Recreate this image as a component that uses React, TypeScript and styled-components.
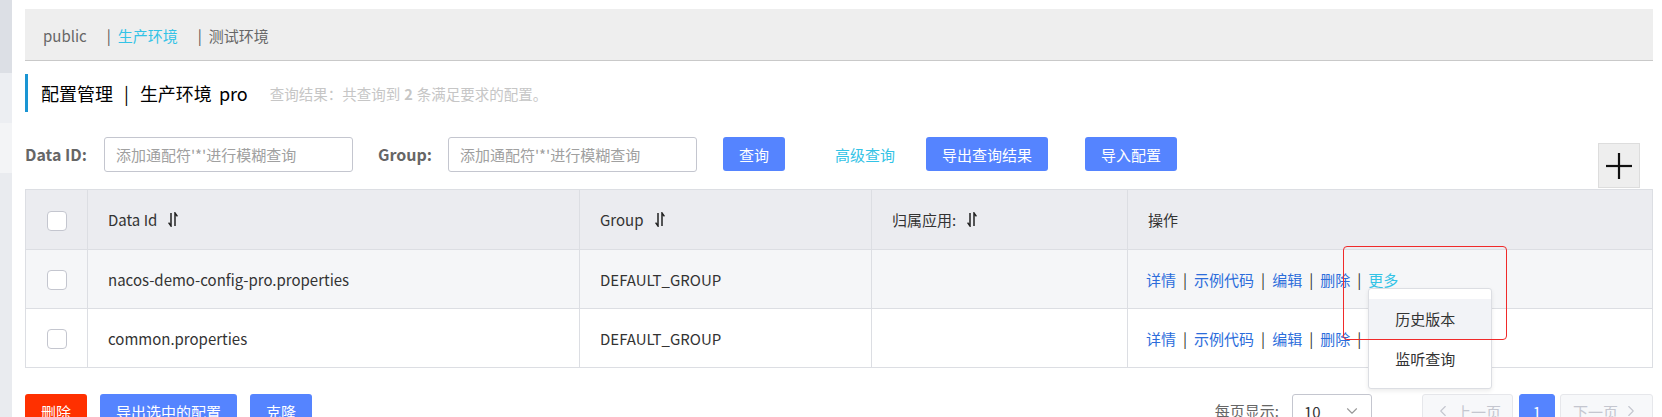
import React from "react";
import styled, { createGlobalStyle } from "styled-components";
import { ChevronDown, ChevronLeft, ChevronRight } from "lucide-react";

const Color = {
  Primary: "#5584ff",
  Danger: "#ff3000",
  Cyan: "#33c3e6",
  Link: "#2c6ddb",
  Border: "#dcdee3",
  Text: "#333333",
  Muted: "#666666",
  Placeholder: "#a0a0a0",
};

const GlobalStyle = createGlobalStyle`
  html, body {
    margin: 0;
    padding: 0;
    background: #fff;
  }
  body {
    font-family: "Noto Sans CJK SC", "Noto Sans", sans-serif;
    font-size: 15px;
    color: ${Color.Text};
  }
  * {
    box-sizing: border-box;
  }
`;

const Page = styled.div`
  display: flex;
  height: 417px;
  overflow: hidden;
`;

const Sidebar = styled.aside`
  width: 12px;
  flex: none;
  display: flex;
  flex-direction: column;
  background: #e9ebef;
`;

const SideBlock = styled.div<{ $h: number; $bg: string }>`
  height: ${({ $h }) => $h}px;
  background: ${({ $bg }) => $bg};
`;

const Main = styled.main`
  flex: 1;
  min-width: 0;
  padding: 9px 9px 0 13px;
`;

const TabBar = styled.div`
  height: 52px;
  background: #eeeeee;
  border-bottom: 1px solid #c9c9c9;
  display: flex;
  align-items: center;
  padding: 2px 0 0 18px;
`;

const Tab = styled.span<{ $active?: boolean }>`
  color: ${({ $active }) => ($active ? Color.Cyan : Color.Muted)};
`;

const TabSep = styled.span`
  margin: 0 7px 0 20px;
  color: #555;
`;

const Title = styled.h2`
  margin: 13px 0 0;
  height: 38px;
  border-left: 3px solid #1a95d3;
  padding-left: 13px;
  display: flex;
  align-items: center;
  font-size: 18px;
  font-weight: normal;
  color: #000;
`;

const TitleSep = styled.span`
  margin: 0 11px;
`;

const TitleEnv = styled.span`
  margin-left: 7px;
`;

const Summary = styled.span`
  margin-left: 22px;
  font-size: 14.5px;
  color: #c6c6c6;

  strong {
    margin: 0 4px;
  }
`;

const SearchRow = styled.div`
  margin-top: 25px;
  height: 52px;
  display: flex;
  align-items: flex-start;
`;

const FieldLabel = styled.label<{ $ml?: number }>`
  margin-left: ${({ $ml = 0 }) => $ml}px;
  line-height: 35px;
  font-size: 16px;
  font-weight: bold;
  color: ${Color.Muted};
`;

const Input = styled.input<{ $ml?: number }>`
  margin-left: ${({ $ml = 0 }) => $ml}px;
  width: 249px;
  height: 35px;
  border: 1px solid #c4c6cf;
  border-radius: 3px;
  padding: 0 11px;
  font: inherit;
  color: ${Color.Text};
  outline: none;

  &::placeholder {
    color: ${Color.Placeholder};
  }
`;

const Button = styled.button<{ $ml?: number; $danger?: boolean }>`
  margin-left: ${({ $ml = 0 }) => $ml}px;
  height: 34px;
  padding: 0 16px;
  border: none;
  border-radius: 3px;
  background: ${({ $danger }) => ($danger ? Color.Danger : Color.Primary)};
  color: #fff;
  font: inherit;
  cursor: pointer;
`;

const TextButton = styled.button<{ $ml?: number }>`
  margin-left: ${({ $ml = 0 }) => $ml}px;
  height: 35px;
  padding: 0;
  border: none;
  background: none;
  color: ${Color.Cyan};
  font: inherit;
  cursor: pointer;
`;

const PlusButton = styled.button`
  margin: 6px 13px 0 auto;
  width: 42px;
  height: 45px;
  padding: 0;
  border: 1px solid #dddddd;
  background: #eeeeee;
  display: flex;
  align-items: center;
  justify-content: center;
`;

const Table = styled.table`
  width: 100%;
  border-collapse: collapse;
  table-layout: fixed;
`;

const Th = styled.th<{ $center?: boolean }>`
  height: 60px;
  background: #ebecf0;
  border: 1px solid ${Color.Border};
  text-align: ${({ $center }) => ($center ? "center" : "left")};
  padding: 0 0 0 ${({ $center }) => ($center ? 0 : 20)}px;
  font-weight: normal;
  font-size: 15px;
  color: ${Color.Text};
`;

const Tr = styled.tr<{ $hover?: boolean }>`
  background: ${({ $hover }) => ($hover ? "#f5f6f8" : "#fff")};
`;

const Td = styled.td<{ $center?: boolean; $pl?: number }>`
  height: 59px;
  border: 1px solid ${Color.Border};
  text-align: ${({ $center }) => ($center ? "center" : "left")};
  padding: 0 0 0 ${({ $pl = 20 }) => $pl}px;
  color: ${Color.Text};
`;

const HeadCell = styled.span`
  display: inline-flex;
  align-items: center;
  gap: 11px;
`;

const Checkbox = styled.span`
  display: inline-block;
  vertical-align: middle;
  width: 20px;
  height: 20px;
  border: 1px solid #c4c6cf;
  border-radius: 4px;
  background: #fff;
`;

const ActionLink = styled.span<{ $hover?: boolean }>`
  color: ${({ $hover }) => ($hover ? Color.Cyan : Color.Link)};
  cursor: pointer;
`;

const ActionSep = styled.span`
  margin: 0 7px;
  color: #333;
`;

const MoreWrap = styled.span`
  position: relative;
  display: inline-block;
  line-height: 20px;
`;

const Menu = styled.ul`
  position: absolute;
  top: 18px;
  left: 0;
  z-index: 2;
  width: 124px;
  margin: 0;
  padding: 10px 0 9px;
  list-style: none;
  background: #fff;
  border: 1px solid ${Color.Border};
  border-radius: 3px;
  box-shadow: 0 2px 4px rgba(0, 0, 0, 0.08);
`;

const MenuItem = styled.li<{ $active?: boolean }>`
  height: 40px;
  line-height: 40px;
  padding-left: 26px;
  color: ${Color.Text};
  background: ${({ $active }) => ($active ? "#f2f3f7" : "#fff")};
`;

const Highlight = styled.div`
  position: absolute;
  top: -24px;
  left: -25px;
  z-index: 3;
  width: 164px;
  height: 94px;
  border: 1px solid #f02a2a;
  border-radius: 4px;
  pointer-events: none;
`;

const BottomBar = styled.div`
  margin-top: 26px;
  display: flex;
  justify-content: space-between;
  align-items: flex-start;
`;

const Group = styled.div`
  display: flex;
  align-items: center;
`;

const PageLabel = styled.span`
  line-height: 34px;
  color: ${Color.Muted};
`;

const Select = styled.div`
  margin-left: 13px;
  width: 80px;
  height: 34px;
  border: 1px solid #c4c6cf;
  border-radius: 3px;
  padding: 0 10px 0 11px;
  display: flex;
  align-items: center;
  justify-content: space-between;
  color: ${Color.Text};
`;

const PageButton = styled.button<{ $ml: number; $w: number; $current?: boolean }>`
  margin-left: ${({ $ml }) => $ml}px;
  width: ${({ $w }) => $w}px;
  height: 34px;
  border: 1px solid ${({ $current }) => ($current ? Color.Primary : "#e6e7eb")};
  border-radius: 3px;
  background: ${({ $current }) => ($current ? Color.Primary : "#f7f8fa")};
  color: ${({ $current }) => ($current ? "#fff" : "#c4c6cf")};
  font: inherit;
  display: flex;
  align-items: center;
  justify-content: center;
  gap: 4px;
  padding: 0;
`;

function SortIcon() {
  return (
    <svg width="10" height="15" viewBox="0 0 10 15" fill="none" stroke="#222" strokeWidth="1.5">
      <path d="M3 1 V14 L0.6 10.6" />
      <path d="M7 14 V1 L9.4 4.4" />
    </svg>
  );
}

function PlusIcon() {
  return (
    <svg width="26" height="26" viewBox="0 0 26 26" stroke="#111" strokeWidth="2.2">
      <line x1="13" y1="0" x2="13" y2="26" />
      <line x1="0" y1="13" x2="26" y2="13" />
    </svg>
  );
}

type Row = { id: string; group: string };

const rows: Row[] = [
  { id: "nacos-demo-config-pro.properties", group: "DEFAULT_GROUP" },
  { id: "common.properties", group: "DEFAULT_GROUP" },
];

function Actions({ open }: { open: boolean }) {
  return (
    <>
      <ActionLink>详情</ActionLink>
      <ActionSep>|</ActionSep>
      <ActionLink>示例代码</ActionLink>
      <ActionSep>|</ActionSep>
      <ActionLink>编辑</ActionLink>
      <ActionSep>|</ActionSep>
      <ActionLink>删除</ActionLink>
      <ActionSep>|</ActionSep>
      <MoreWrap>
        <ActionLink $hover={open}>更多</ActionLink>
        {open && (
          <>
            <Menu>
              <MenuItem $active>历史版本</MenuItem>
              <MenuItem>监听查询</MenuItem>
            </Menu>
            <Highlight />
          </>
        )}
      </MoreWrap>
    </>
  );
}

export default function App() {
  const placeholder = "添加通配符'*'进行模糊查询";

  return (
    <>
      <GlobalStyle />
      <Page>
        <Sidebar>
          <SideBlock $h={73} $bg="#dcdfe5" />
          <SideBlock $h={50} $bg="#eceef2" />
          <SideBlock $h={50} $bg="#f3f4f6" />
        </Sidebar>
        <Main>
          <TabBar>
            <Tab>public</Tab>
            <TabSep>|</TabSep>
            <Tab $active>生产环境</Tab>
            <TabSep>|</TabSep>
            <Tab>测试环境</Tab>
          </TabBar>

          <Title>
            配置管理
            <TitleSep>|</TitleSep>
            生产环境<TitleEnv>pro</TitleEnv>
            <Summary>
              查询结果：共查询到<strong>2</strong>条满足要求的配置。
            </Summary>
          </Title>

          <SearchRow>
            <FieldLabel>Data ID:</FieldLabel>
            <Input $ml={17} placeholder={placeholder} />
            <FieldLabel $ml={25}>Group:</FieldLabel>
            <Input $ml={16} placeholder={placeholder} />
            <Button $ml={26}>查询</Button>
            <TextButton $ml={50}>高级查询</TextButton>
            <Button $ml={31}>导出查询结果</Button>
            <Button $ml={37}>导入配置</Button>
            <PlusButton>
              <PlusIcon />
            </PlusButton>
          </SearchRow>

          <Table>
            <colgroup>
              <col style={{ width: 62 }} />
              <col style={{ width: 492 }} />
              <col style={{ width: 292 }} />
              <col style={{ width: 256 }} />
              <col />
            </colgroup>
            <thead>
              <tr>
                <Th $center>
                  <Checkbox />
                </Th>
                <Th>
                  <HeadCell>
                    Data Id <SortIcon />
                  </HeadCell>
                </Th>
                <Th>
                  <HeadCell>
                    Group <SortIcon />
                  </HeadCell>
                </Th>
                <Th>
                  <HeadCell>
                    归属应用: <SortIcon />
                  </HeadCell>
                </Th>
                <Th>操作</Th>
              </tr>
            </thead>
            <tbody>
              {rows.map((row, i) => (
                <Tr key={row.id} $hover={i === 0}>
                  <Td $center $pl={0}>
                    <Checkbox />
                  </Td>
                  <Td>{row.id}</Td>
                  <Td>{row.group}</Td>
                  <Td />
                  <Td $pl={18}>
                    <Actions open={i === 0} />
                  </Td>
                </Tr>
              ))}
            </tbody>
          </Table>

          <BottomBar>
            <Group>
              <Button $danger>删除</Button>
              <Button $ml={13}>导出选中的配置</Button>
              <Button $ml={13}>克隆</Button>
            </Group>
            <Group>
              <PageLabel>每页显示:</PageLabel>
              <Select>
                10
                <ChevronDown size={18} strokeWidth={1.5} color="#999" />
              </Select>
              <PageButton $ml={50} $w={91}>
                <ChevronLeft size={18} strokeWidth={1.5} />
                上一页
              </PageButton>
              <PageButton $ml={6} $w={36} $current>
                1
              </PageButton>
              <PageButton $ml={5} $w={93}>
                下一页
                <ChevronRight size={18} strokeWidth={1.5} />
              </PageButton>
            </Group>
          </BottomBar>
        </Main>
      </Page>
    </>
  );
}
